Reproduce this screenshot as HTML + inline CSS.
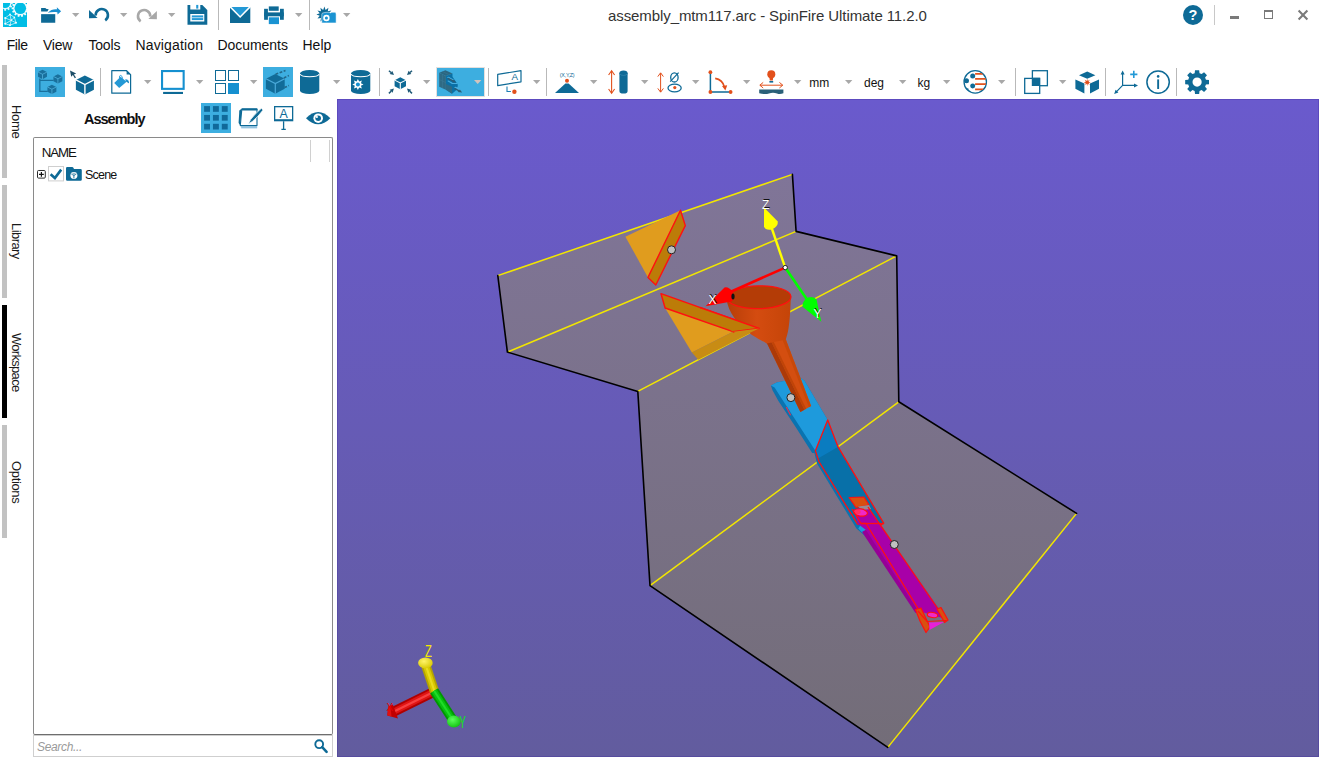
<!DOCTYPE html>
<html><head><meta charset="utf-8"><title>assembly_mtm117.arc - SpinFire Ultimate 11.2.0</title>
<style>
html,body{margin:0;padding:0;background:#fff}
body{width:1320px;height:758px;position:relative;overflow:hidden;font-family:"Liberation Sans",sans-serif;color:#1a1a1a}
.a{position:absolute}
.t{position:absolute;white-space:nowrap;line-height:1}
svg{position:absolute;overflow:visible}
.sep{position:absolute;width:1px;background:#b9b9b9}
.hl{position:absolute;background:#3daee0}
.vt{position:absolute;white-space:nowrap;line-height:1;font-size:13px;transform-origin:0 0;transform:rotate(90deg)}
.bar{position:absolute;left:1.5px;width:5.5px;background:#c2c2c2}
</style></head><body>

<svg style="left:3px;top:3px" width="24" height="24" viewBox="0 0 24 24"><defs><clipPath id="appc"><rect width="24" height="24"/></clipPath></defs>
<rect width="24" height="24" fill="#00bde5"/>
<g clip-path="url(#appc)"><path d="M25.96,4.44 L25.96,6.16 L24.22,6.36 L24.00,7.34 L25.47,8.28 L24.73,9.83 L23.07,9.26 L22.45,10.05 L23.37,11.53 L22.03,12.60 L20.78,11.37 L19.88,11.81 L20.06,13.55 L18.39,13.93 L17.80,12.28 L16.80,12.28 L16.21,13.93 L14.54,13.55 L14.72,11.81 L13.82,11.37 L12.57,12.60 L11.23,11.53 L12.15,10.05 L11.53,9.26 L9.87,9.83 L9.13,8.28 L10.60,7.34 L10.38,6.36 L8.64,6.16 L8.64,4.44 L10.38,4.24 L10.60,3.26 L9.13,2.32 L9.87,0.77 L11.53,1.34 L12.15,0.55 L11.23,-0.93 L12.57,-2.00 L13.82,-0.77 L14.72,-1.21 L14.54,-2.95 L16.21,-3.33 L16.80,-1.68 L17.80,-1.68 L18.39,-3.33 L20.06,-2.95 L19.88,-1.21 L20.78,-0.77 L22.03,-2.00 L23.37,-0.93 L22.45,0.55 L23.07,1.34 L24.73,0.77 L25.47,2.32 L24.00,3.26 L24.22,4.24 Z M17.310000000000002,5.3 A0.01,0.01 0 1 0 17.29,5.3 A0.01,0.01 0 1 0 17.310000000000002,5.3 Z" fill="#f2fbfe" fill-rule="evenodd"/><path d="M9.75,-0.67 L9.75,1.07 L8.11,1.26 L7.85,2.23 L9.17,3.22 L8.30,4.73 L6.78,4.07 L6.07,4.78 L6.73,6.30 L5.22,7.17 L4.23,5.85 L3.26,6.11 L3.07,7.75 L1.33,7.75 L1.14,6.11 L0.17,5.85 L-0.82,7.17 L-2.33,6.30 L-1.67,4.78 L-2.38,4.07 L-3.90,4.73 L-4.77,3.22 L-3.45,2.23 L-3.71,1.26 L-5.35,1.07 L-5.35,-0.67 L-3.71,-0.86 L-3.45,-1.83 L-4.77,-2.82 L-3.90,-4.33 L-2.38,-3.67 L-1.67,-4.38 L-2.33,-5.90 L-0.82,-6.77 L0.17,-5.45 L1.14,-5.71 L1.33,-7.35 L3.07,-7.35 L3.26,-5.71 L4.23,-5.45 L5.22,-6.77 L6.73,-5.90 L6.07,-4.38 L6.78,-3.67 L8.30,-4.33 L9.17,-2.82 L7.85,-1.83 L8.11,-0.86 Z M2.21,0.2 A0.01,0.01 0 1 0 2.1900000000000004,0.2 A0.01,0.01 0 1 0 2.21,0.2 Z" fill="#e4f7fc" fill-rule="evenodd"/><circle cx="17.3" cy="5.3" r="5.8" fill="#00bde5"/><circle cx="2.2" cy="0.2" r="4.9" fill="#00bde5"/>
<g fill="none" stroke="#e9f9fd" stroke-width="0.7" stroke-linejoin="round">
<polygon points="7,11.5 11.4,14.4 13,19.8 7,22.2 2.2,20.8 2.2,15"/>
<path d="M2.2,15 L8.2,17.4 L13,19.8 M8.2,17.4 L7,22.2 M7,11.5 L8.2,17.4 M11.4,14.4 L8.2,17.4 M2.2,20.8 L8.2,17.4"/></g>
<g fill="#f4fcfe"><circle cx="7" cy="11.5" r="0.9"/><circle cx="11.4" cy="14.4" r="0.8"/><circle cx="13" cy="19.8" r="1"/><circle cx="7" cy="22.2" r="0.9"/><circle cx="2.2" cy="20.8" r="1"/><circle cx="2.2" cy="15" r="1"/><circle cx="8.4" cy="17" r="0.8"/></g></g></svg>
<svg style="left:41px;top:7px" width="20" height="16" viewBox="0 0 20 16"><rect x="0.1" y="7.15" width="14.15" height="8.6" fill="#0e6a96"/>
<polygon points="0.1,0.9 4.75,0.9 4.75,1.8 7.7,2.3 6.4,4.5 0.1,4.5" fill="#0e6a96"/>
<path d="M6.8,5.7 C9.5,2.6 12.6,1.9 16,2.2 L15.8,0.3 L20.1,4.2 L16.6,7.4 L16.3,5.3 C13,4.9 10,5.2 6.8,5.7 Z" fill="#1a8fd0"/></svg>
<svg style="left:72.4px;top:13px" width="7.4" height="3.9" viewBox="0 0 7.4 3.9"><polygon points="0,0 7.4,0 3.7,3.9" fill="#a8a8a8"/></svg>
<svg style="left:89px;top:7px" width="20" height="16" viewBox="0 0 20 16"><path d="M6.65,8.6 A6.15,6.15 0 1 1 16.24,13.3" fill="none" stroke="#0e6a96" stroke-width="2.6"/>
<polygon points="0,3 0,11.3 8.6,11.1" fill="#0e6a96"/></svg>
<svg style="left:120.3px;top:13px" width="7.4" height="3.9" viewBox="0 0 7.4 3.9"><polygon points="0,0 7.4,0 3.7,3.9" fill="#a8a8a8"/></svg>
<svg style="left:137px;top:7.6px" width="20" height="16" viewBox="0 0 20 16"><g transform="translate(19.9,0) scale(-1,1)"><path d="M6.65,8.6 A6.15,6.15 0 1 1 16.24,13.3" fill="none" stroke="#a8a8a8" stroke-width="2.6"/>
<polygon points="0,3 0,11.3 8.6,11.1" fill="#a8a8a8"/></g></svg>
<svg style="left:168.2px;top:13px" width="7.4" height="3.9" viewBox="0 0 7.4 3.9"><polygon points="0,0 7.4,0 3.7,3.9" fill="#a8a8a8"/></svg>
<svg style="left:186.7px;top:5px" width="20.4" height="20" viewBox="0 0 20.4 20"><path d="M0.5,0 H15.3 L20.3,5 V19.8 H0.5 Z" fill="#0e6a96"/>
<rect x="3.3" y="-0.1" width="10" height="4.6" fill="#fff"/><rect x="9.2" y="-0.1" width="2.1" height="3.7" fill="#2399d6"/>
<rect x="3.3" y="9" width="14" height="7.5" fill="#fff"/>
<rect x="4.8" y="10.4" width="11.4" height="4.7" fill="#2399d6"/><rect x="4.8" y="12.4" width="11.4" height="0.7" fill="#e8f4fb"/></svg>
<div class="sep" style="left:218px;top:0px;height:30px;background:#b9b9b9"></div>
<svg style="left:229.7px;top:7px" width="20.3" height="16" viewBox="0 0 20.3 16"><rect width="20.3" height="16" fill="#0e6a96"/>
<polygon points="0.6,0 19.7,0 10.15,9.6" fill="#2399d6"/>
<polyline points="0,-0.4 10.15,10 20.3,-0.4" fill="none" stroke="#fff" stroke-width="1.5"/></svg>
<svg style="left:264.2px;top:5.8px" width="20" height="18" viewBox="0 0 20 18"><rect x="4.8" y="0.4" width="9.9" height="4.4" fill="#0e6a96"/>
<rect x="0.1" y="2.8" width="3.8" height="11" fill="#0e6a96"/><rect x="16" y="2.8" width="3.8" height="11" fill="#0e6a96"/>
<rect x="0.1" y="6.4" width="19.7" height="3.9" fill="#0e6a96"/>
<rect x="4.8" y="11.3" width="10.2" height="6.8" fill="#1a93d2"/></svg>
<svg style="left:295.3px;top:13px" width="7.4" height="3.9" viewBox="0 0 7.4 3.9"><polygon points="0,0 7.4,0 3.7,3.9" fill="#a8a8a8"/></svg>
<div class="sep" style="left:308.8px;top:0px;height:30px;background:#b9b9b9"></div>
<svg style="left:316.2px;top:7.4px" width="20" height="16" viewBox="0 0 20 16"><polygon points="16.40,7.60 13.04,8.84 15.33,11.60 11.79,10.99 12.40,14.53 9.64,12.24 8.40,15.60 7.16,12.24 4.40,14.53 5.01,10.99 1.47,11.60 3.76,8.84 0.40,7.60 3.76,6.36 1.47,3.60 5.01,4.21 4.40,0.67 7.16,2.96 8.40,-0.40 9.64,2.96 12.40,0.67 11.79,4.21 15.33,3.60 13.04,6.36" fill="#0e6a96"/><path d="M5.8,7.4 Q5.8,6.1 7,5.9 L10,5.3 H13.8 L14.3,6 H14.9 L15.4,5.3 H19 Q20.1,5.5 20.1,7 V15.9 H5.8 Z" fill="#1a93d2" stroke="#fff" stroke-width="0.5"/>
<circle cx="10.4" cy="11" r="3.2" fill="#fff"/><circle cx="10.4" cy="11" r="1.55" fill="#1a93d2"/></svg>
<svg style="left:343.4px;top:13px" width="7.4" height="3.9" viewBox="0 0 7.4 3.9"><polygon points="0,0 7.4,0 3.7,3.9" fill="#a8a8a8"/></svg>
<svg style="left:1183px;top:4.9px" width="20" height="20" viewBox="0 0 20 20"><circle cx="10" cy="10" r="10" fill="#0e6a96"/>
<text x="10" y="15.2" text-anchor="middle" font-family="Liberation Sans, sans-serif" font-weight="bold" font-size="14.5" fill="#fff">?</text></svg>
<div class="sep" style="left:1214px;top:5px;height:20px;background:#c8c8c8"></div>
<div class="a" style="left:1230px;top:15.6px;width:9px;height:3.4px;background:#7a7a7a"></div>
<div class="a" style="left:1264px;top:10.4px;width:7px;height:5.2px;border:1px solid #7a7a7a;border-top-width:2.4px"></div>
<svg style="left:1298px;top:10.2px" width="10" height="10" viewBox="0 0 10 10"><path d="M0.6,0.6 L9.4,9.4 M9.4,0.6 L0.6,9.4" stroke="#7a7a7a" stroke-width="2.1" fill="none"/></svg>
<div class="t" id="title" style="left:608px;top:8.4px;font-size:15px;letter-spacing:-0.09px;color:#333">assembly_mtm117.arc - SpinFire Ultimate 11.2.0</div>
<div class="t" id="m0" style="left:6.7px;top:38.1px;font-size:14px;letter-spacing:-0.42px;color:#111">File</div>
<div class="t" id="m1" style="left:43px;top:38.1px;font-size:14px;letter-spacing:-0.23px;color:#111">View</div>
<div class="t" id="m2" style="left:88.4px;top:38.1px;font-size:14px;letter-spacing:-0.16px;color:#111">Tools</div>
<div class="t" id="m3" style="left:135.5px;top:38.1px;font-size:14px;letter-spacing:0.15px;color:#111">Navigation</div>
<div class="t" id="m4" style="left:217.4px;top:38.1px;font-size:14px;letter-spacing:-0.04px;color:#111">Documents</div>
<div class="t" id="m5" style="left:302.5px;top:38.1px;font-size:14px;letter-spacing:0px;color:#111">Help</div>
<div class="hl" style="left:35px;top:67px;width:30px;height:30px"></div>
<svg style="left:35px;top:67px" width="30" height="30" viewBox="0 0 30 30"><path d="M4.85,11.4 V24.3 H12.7 M4.85,13.4 H18.6" fill="none" stroke="#19709d" stroke-width="1.3"/><polygon points="7.5,2.8 11.965,5.055999999999999 11.965,9.85 7.5,12.2 3.035,9.85 3.035,5.055999999999999" fill="#19709d"/><path d="M3.035,5.055999999999999 L7.5,7.312 L11.965,5.055999999999999 M7.5,7.312 V12.2" fill="none" stroke="#4fb0dc" stroke-width="0.8"/><polygon points="22.9,7.2 27.365,9.456 27.365,14.25 22.9,16.6 18.435,14.25 18.435,9.456" fill="#19709d"/><path d="M18.435,9.456 L22.9,11.712 L27.365,9.456 M22.9,11.712 V16.6" fill="none" stroke="#4fb0dc" stroke-width="0.8"/><polygon points="16.9,17.7 21.365,19.956 21.365,24.75 16.9,27.099999999999998 12.434999999999999,24.75 12.434999999999999,19.956" fill="#19709d"/><path d="M12.434999999999999,19.956 L16.9,22.212 L21.365,19.956 M16.9,22.212 V27.099999999999998" fill="none" stroke="#4fb0dc" stroke-width="0.8"/></svg>
<svg style="left:70px;top:70px" width="25" height="25" viewBox="0 0 25 25"><polygon points="14.9,5.4 23.925,9.96 23.925,19.65 14.9,24.4 5.875,19.65 5.875,9.96" fill="#0e6a96"/><path d="M5.875,9.96 L14.9,14.52 L23.925,9.96 M14.9,14.52 V24.4" fill="none" stroke="#fff" stroke-width="1.4"/><polygon points="0,0.6 6.2,3.6 3.9,4.4 6,7.6 4.8,8.2 2.9,5.1 1.2,6.8" fill="#1d4e68"/></svg>
<div class="sep" style="left:100px;top:68px;height:28px;background:#b9b9b9"></div>
<svg style="left:110.5px;top:69px" width="21" height="25" viewBox="0 0 21 25"><path d="M0.8,1.7 H15.6 L19.6,5.6 V24.2 H0.8 Z" fill="#fff" stroke="#0e6a96" stroke-width="1.2" stroke-linejoin="round"/>
<polygon points="15.6,1.7 19.6,5.6 15.6,5.6" fill="#0e6a96"/>
<polygon points="3.2,13.9 9.6,7.8 15.6,12.7 8.2,19.1" fill="#2399d6"/>
<path d="M8.4,9.4 Q8.2,6 9.8,6.4 Q11.2,6.8 11.6,9.6" fill="none" stroke="#2399d6" stroke-width="0.9"/>
<path d="M14.2,10.2 Q18.8,10.4 17.8,14.6 Q16.8,12.8 14.8,12.6 Z" fill="#2399d6"/>
<path d="M15.4,12 Q17,12.6 17.4,14" fill="none" stroke="#0e6a96" stroke-width="0.7"/></svg>
<svg style="left:144.2px;top:80px" width="7.4" height="3.9" viewBox="0 0 7.4 3.9"><polygon points="0,0 7.4,0 3.7,3.9" fill="#a8a8a8"/></svg>
<svg style="left:161px;top:70px" width="24" height="24" viewBox="0 0 24 24"><rect x="1.05" y="1.05" width="21.6" height="17.8" fill="#fff" stroke="#1590d0" stroke-width="2.1"/>
<rect x="2.1" y="21.9" width="19.9" height="2.1" fill="#0e6a96"/></svg>
<svg style="left:196.4px;top:80px" width="7.4" height="3.9" viewBox="0 0 7.4 3.9"><polygon points="0,0 7.4,0 3.7,3.9" fill="#a8a8a8"/></svg>
<svg style="left:215px;top:70px" width="24" height="24" viewBox="0 0 24 24"><g fill="#fff" stroke="#0e6a96" stroke-width="1"><rect x="0.5" y="0.5" width="10" height="10"/><rect x="13.5" y="0.5" width="10" height="10"/><rect x="0.5" y="13.5" width="10" height="10"/></g>
<rect x="13" y="13" width="11" height="11" fill="#1590d0"/></svg>
<svg style="left:250px;top:80px" width="7.4" height="3.9" viewBox="0 0 7.4 3.9"><polygon points="0,0 7.4,0 3.7,3.9" fill="#a8a8a8"/></svg>
<div class="hl" style="left:263.3px;top:67px;width:30px;height:30px"></div>
<svg style="left:263.3px;top:67px" width="30" height="30" viewBox="0 0 30 30"><polygon points="12.3,6.999999999999998 21.705,11.751999999999999 21.705,21.849999999999998 12.3,26.799999999999997 2.8950000000000014,21.849999999999998 2.8950000000000014,11.751999999999999" fill="#116c99"/><path d="M2.8950000000000014,11.751999999999999 L12.3,16.503999999999998 L21.705,11.751999999999999 M12.3,16.503999999999998 V26.799999999999997" fill="none" stroke="#4aa9da" stroke-width="1.2"/><g stroke="#23688a" stroke-width="1.6" stroke-dasharray="2.8 1.5" fill="none"><path d="M12.6,7.2 L22.5,3.5"/><path d="M20.8,10.9 L25.9,8.6"/><path d="M21.4,20.6 L25.9,18.6"/></g></svg>
<svg style="left:299.8px;top:69.7px" width="19.3" height="24.1" viewBox="0 0 19.3 24.1"><path d="M0,3.5 V20.5 A9.65,3.6 0 0 0 19.3,20.5 V3.5 Z" fill="#0e6a96"/>
<ellipse cx="9.65" cy="3.5" rx="9.65" ry="3.5" fill="#0e6a96"/>
<path d="M0.2,4.2 A9.5,2.9 0 0 0 19.1,4.2" fill="none" stroke="#fff" stroke-width="1.1"/></svg>
<svg style="left:333.3px;top:80px" width="7.4" height="3.9" viewBox="0 0 7.4 3.9"><polygon points="0,0 7.4,0 3.7,3.9" fill="#a8a8a8"/></svg>
<svg style="left:350.7px;top:69.7px" width="19.3" height="24.1" viewBox="0 0 19.3 24.1"><path d="M0,3.5 V20.5 A9.65,3.6 0 0 0 19.3,20.5 V3.5 Z" fill="#0e6a96"/>
<ellipse cx="9.65" cy="3.5" rx="9.65" ry="3.5" fill="#0e6a96"/>
<path d="M0.2,4.2 A9.5,2.9 0 0 0 19.1,4.2" fill="none" stroke="#fff" stroke-width="1.1"/><polygon points="12.50,14.50 9.95,15.76 10.86,18.46 8.16,17.55 6.90,20.10 5.64,17.55 2.94,18.46 3.85,15.76 1.30,14.50 3.85,13.24 2.94,10.54 5.64,11.45 6.90,8.90 8.16,11.45 10.86,10.54 9.95,13.24" fill="#fff"/><circle cx="6.9" cy="14.5" r="2" fill="#1590d0"/></svg>
<div class="sep" style="left:379.3px;top:68px;height:28px;background:#b9b9b9"></div>
<svg style="left:387.5px;top:70px" width="25" height="24.4" viewBox="0 0 25 24.4"><polygon points="12.3,7.25 18.0,10.129999999999999 18.0,16.25 12.3,19.25 6.600000000000001,16.25 6.600000000000001,10.129999999999999" fill="#0e6a96"/><path d="M6.600000000000001,10.129999999999999 L12.3,13.01 L18.0,10.129999999999999 M12.3,13.01 V19.25" fill="none" stroke="#fff" stroke-width="1.1"/><line x1="0.9" y1="0.7" x2="3.02" y2="2.49" stroke="#1d5876" stroke-width="1.5"/><polygon points="6.00,5.00 1.66,4.09 4.37,0.88" fill="#1d5876"/><line x1="24" y1="0.7" x2="21.96" y2="2.46" stroke="#1d5876" stroke-width="1.5"/><polygon points="19.00,5.00 20.59,0.86 23.33,4.05" fill="#1d5876"/><line x1="0.9" y1="23.4" x2="3.09" y2="21.30" stroke="#1d5876" stroke-width="1.5"/><polygon points="5.90,18.60 4.54,22.82 1.63,19.79" fill="#1d5876"/><line x1="24" y1="23.4" x2="21.81" y2="21.30" stroke="#1d5876" stroke-width="1.5"/><polygon points="19.00,18.60 23.27,19.79 20.36,22.82" fill="#1d5876"/></svg>
<svg style="left:423.3px;top:80px" width="7.4" height="3.9" viewBox="0 0 7.4 3.9"><polygon points="0,0 7.4,0 3.7,3.9" fill="#a8a8a8"/></svg>
<div class="hl" style="left:436.2px;top:67.2px;width:46.6px;height:27.5px;border:1px solid #e4e0de"></div>
<svg style="left:439px;top:70px" width="25" height="24" viewBox="0 0 25 24"><polygon points="6.9,5.9 13.5,3.5 13.5,6.8 18.75,14.4 18.75,16.3 16.85,20.6 13.05,23.7 6.9,19.65" fill="#0a70a6"/>
<polygon points="0.2,2.8 6.4,0.2 13.5,3.5 6.9,5.9" fill="#2b6782"/>
<polygon points="0.2,2.8 6.9,5.9 6.9,19.65 0.2,16.8" fill="#2f6a84"/>
<polygon points="6.9,13.95 13.05,16.8 13.05,23.7 6.9,19.65" fill="#2f6a84"/>
<path d="M0.2,9.6 L6.9,12.6 M3.5,4.4 V18.2 M3.3,1.5 L10.2,4.7" stroke="#3d7a96" stroke-width="0.5" fill="none"/>
<polygon points="7.8,7.3 9.7,6.8 15,9.7 13,10.4" fill="#49afe0"/>
<polygon points="9.2,10.4 14,13 18.2,13 18.2,14 13,14 8.3,11.1" fill="#49afe0"/>
<polygon points="14.9,17.3 16.8,16.8 21.6,19.2 19.7,19.9" fill="#49afe0"/>
<g stroke="#2b5d76" stroke-width="1.4" fill="none"><path d="M8.7,8.25 L14.4,11.1"/><path d="M15.4,18.4 L20.1,20.8"/></g>
<polygon points="17.05,12.5 14.9,9.7 13,12.35" fill="#2b5d76"/><polygon points="23.1,22.5 20.85,19.5 18.7,22.1" fill="#2b5d76"/></svg>
<svg style="left:474.2px;top:80.2px" width="7.4" height="3.9" viewBox="0 0 7.4 3.9"><polygon points="0,0 7.4,0 3.7,3.9" fill="#d2c4be"/></svg>
<div class="sep" style="left:488.3px;top:68px;height:28px;background:#b9b9b9"></div>
<svg style="left:496.6px;top:70px" width="25" height="24" viewBox="0 0 25 24"><polygon points="0.7,4.4 24,0.7 24,11.8 0.7,15.6" fill="#fff" stroke="#0e6a96" stroke-width="1.2" stroke-linejoin="round"/>
<text x="14.6" y="10.2" font-family="Liberation Sans, sans-serif" font-size="9.8" fill="#0e6a96">A</text>
<path d="M10,16.5 V21.5 H13.9" fill="none" stroke="#1e7fb4" stroke-width="1.1"/>
<circle cx="17.4" cy="21.8" r="2.2" fill="#e2501c"/></svg>
<svg style="left:532.6px;top:80px" width="7.4" height="3.9" viewBox="0 0 7.4 3.9"><polygon points="0,0 7.4,0 3.7,3.9" fill="#a8a8a8"/></svg>
<div class="sep" style="left:546.3px;top:68px;height:28px;background:#b9b9b9"></div>
<svg style="left:555px;top:72px" width="24" height="21" viewBox="0 0 24 21"><text x="12.1" y="4.5" text-anchor="middle" font-family="Liberation Sans, sans-serif" font-size="5.4" letter-spacing="-0.25" fill="#0e6a96">(X,Y,Z)</text>
<polygon points="0,21 24,21 13.6,11.4 10.4,11.4" fill="#0e6a96"/>
<circle cx="12" cy="8.8" r="2" fill="#e2501c"/></svg>
<svg style="left:590.2px;top:80px" width="7.4" height="3.9" viewBox="0 0 7.4 3.9"><polygon points="0,0 7.4,0 3.7,3.9" fill="#a8a8a8"/></svg>
<svg style="left:607.5px;top:70px" width="20" height="24" viewBox="0 0 20 24"><path d="M3.6,1 V23" stroke="#e2501c" stroke-width="1.1"/>
<path d="M0.6,5 L3.6,0.8 L6.6,5 M0.6,19 L3.6,23.2 L6.6,19" fill="none" stroke="#e2501c" stroke-width="1.1"/>
<path d="M11.4,3 V21 A4.1,2.6 0 0 0 19.6,21 V3 Z" fill="#0e6a96"/><ellipse cx="15.5" cy="3" rx="4.1" ry="2.6" fill="#0e6a96"/>
<path d="M11.6,3.6 A4,2.4 0 0 0 19.4,3.6" fill="none" stroke="#3d8cb4" stroke-width="0.6"/></svg>
<svg style="left:641.3px;top:80px" width="7.4" height="3.9" viewBox="0 0 7.4 3.9"><polygon points="0,0 7.4,0 3.7,3.9" fill="#a8a8a8"/></svg>
<svg style="left:656.7px;top:71.6px" width="25" height="21" viewBox="0 0 25 21"><path d="M3.6,1 V20" stroke="#e2501c" stroke-width="1"/>
<path d="M0.8,4.6 L3.6,0.8 L6.4,4.6 M0.8,16.4 L3.6,20.2 L6.4,16.4" fill="none" stroke="#e2501c" stroke-width="1"/>
<ellipse cx="17.4" cy="5.4" rx="3.7" ry="4.6" fill="none" stroke="#0e6a96" stroke-width="1.3"/>
<path d="M13.2,9.6 L21.6,0.6" stroke="#0e6a96" stroke-width="1.2"/>
<ellipse cx="17.6" cy="16" rx="6.6" ry="3.9" fill="#fff" stroke="#0e6a96" stroke-width="1.3"/>
<circle cx="17.8" cy="15.6" r="1.6" fill="#e2501c"/></svg>
<svg style="left:692.1px;top:80px" width="7.4" height="3.9" viewBox="0 0 7.4 3.9"><polygon points="0,0 7.4,0 3.7,3.9" fill="#a8a8a8"/></svg>
<svg style="left:707.5px;top:70px" width="25" height="24" viewBox="0 0 25 24"><path d="M2.4,2 V22 H22.6" fill="none" stroke="#0e6a96" stroke-width="1.5"/>
<path d="M7.2,8.4 Q14.6,9.6 16.6,17.4" fill="none" stroke="#e2501c" stroke-width="1.6"/>
<polygon points="14,16 19.2,15.2 17.4,20.4" fill="#e2501c"/>
<circle cx="2.4" cy="2.2" r="1.9" fill="#e2501c"/><circle cx="2.4" cy="22" r="1.9" fill="#e2501c"/><circle cx="22.6" cy="22" r="1.9" fill="#e2501c"/></svg>
<svg style="left:743.3px;top:80px" width="7.4" height="3.9" viewBox="0 0 7.4 3.9"><polygon points="0,0 7.4,0 3.7,3.9" fill="#a8a8a8"/></svg>
<svg style="left:758.8px;top:70px" width="24.6" height="24" viewBox="0 0 24.6 24"><circle cx="12.3" cy="4.2" r="4" fill="#e2501c"/><path d="M10.2,6 H14.4 L13.8,10.6 H10.8 Z" fill="#e2501c"/>
<rect x="10.4" y="11" width="3.8" height="1.6" fill="#0e6a96"/>
<path d="M1,15.2 H23.6" stroke="#e2501c" stroke-width="1"/><path d="M4.2,12.4 L0.8,15.2 L4.2,18 M20.4,12.4 L23.8,15.2 L20.4,18" fill="none" stroke="#e2501c" stroke-width="1"/>
<path d="M0.2,19.4 H24.4 V23.2 Q21,24.6 18,23.4 Q14,22 10,23.4 Q6,24.8 0.2,23.2 Z" fill="#2a6078"/></svg>
<svg style="left:794.3px;top:80px" width="7.4" height="3.9" viewBox="0 0 7.4 3.9"><polygon points="0,0 7.4,0 3.7,3.9" fill="#a8a8a8"/></svg>
<div class="t" id="u0" style="left:809.3px;top:76.5px;font-size:12px;letter-spacing:0px;color:#111">mm</div>
<svg style="left:845.3px;top:80px" width="7.4" height="3.9" viewBox="0 0 7.4 3.9"><polygon points="0,0 7.4,0 3.7,3.9" fill="#a8a8a8"/></svg>
<div class="t" id="u1" style="left:864px;top:76.5px;font-size:12px;letter-spacing:0px;color:#111">deg</div>
<svg style="left:899.2px;top:80px" width="7.4" height="3.9" viewBox="0 0 7.4 3.9"><polygon points="0,0 7.4,0 3.7,3.9" fill="#a8a8a8"/></svg>
<div class="t" id="u2" style="left:917.5px;top:76.5px;font-size:12px;letter-spacing:0px;color:#111">kg</div>
<svg style="left:943.2px;top:80px" width="7.4" height="3.9" viewBox="0 0 7.4 3.9"><polygon points="0,0 7.4,0 3.7,3.9" fill="#a8a8a8"/></svg>
<svg style="left:962.8px;top:70px" width="24.4" height="24.4" viewBox="0 0 24.4 24.4"><defs><clipPath id="c17"><circle cx="12.25" cy="11.9" r="10.9"/></clipPath></defs>
<circle cx="12.25" cy="11.9" r="11.2" fill="#fff" stroke="#0e6a96" stroke-width="1.3"/>
<g stroke="#e0531e" stroke-width="1.8" clip-path="url(#c17)"><path d="M12.1,3.85 H24 M12.1,8.8 H24 M12.1,14.1 H24 M12.1,19.4 H24"/></g>
<g fill="#0e6a96"><circle cx="9.7" cy="6" r="2.5"/><circle cx="3.5" cy="10.8" r="2.5"/><circle cx="9.7" cy="16.1" r="2.5"/><circle cx="4.6" cy="19.3" r="1"/></g></svg>
<svg style="left:998.2px;top:80px" width="7.4" height="3.9" viewBox="0 0 7.4 3.9"><polygon points="0,0 7.4,0 3.7,3.9" fill="#a8a8a8"/></svg>
<div class="sep" style="left:1015.3px;top:68px;height:28px;background:#b9b9b9"></div>
<svg style="left:1024.2px;top:70px" width="24.2" height="24" viewBox="0 0 24.2 24"><rect x="8.4" y="0.7" width="15" height="15" fill="#fff" stroke="#0e6a96" stroke-width="1.3"/>
<rect x="0.7" y="8.4" width="15" height="15" fill="#fff" stroke="#0e6a96" stroke-width="1.3"/>
<rect x="7.8" y="7.8" width="8.2" height="8.2" fill="#0e6a96"/></svg>
<svg style="left:1059.3px;top:80px" width="7.4" height="3.9" viewBox="0 0 7.4 3.9"><polygon points="0,0 7.4,0 3.7,3.9" fill="#a8a8a8"/></svg>
<svg style="left:1075px;top:70.6px" width="24.4" height="23" viewBox="0 0 24.4 23"><polygon points="12.2,0.6 20.4,4.2 12.2,7.8 4,4.2" fill="#0e6a96"/>
<polygon points="0.4,8.4 9.4,12.6 9.4,22.4 0.4,17.8" fill="#0e6a96"/>
<polygon points="24,8.4 15,12.6 15,22.4 24,17.8" fill="#0e6a96"/><polygon points="15.80,11.40 13.59,11.97 14.75,13.95 12.77,12.79 12.20,15.00 11.63,12.79 9.65,13.95 10.81,11.97 8.60,11.40 10.81,10.83 9.65,8.85 11.63,10.01 12.20,7.80 12.77,10.01 14.75,8.85 13.59,10.83" fill="#e2501c"/></svg>
<div class="sep" style="left:1105.3px;top:68px;height:28px;background:#b9b9b9"></div>
<svg style="left:1114.2px;top:70px" width="24.4" height="24" viewBox="0 0 24.4 24"><path d="M8.6,3 V15.4 H21 M8.6,15.4 L1.6,22.6" fill="none" stroke="#0e6a96" stroke-width="1.2"/>
<polygon points="8.6,0.4 10.6,4.4 6.6,4.4" fill="#0e6a96"/><polygon points="24,15.4 20,13.4 20,17.4" fill="#0e6a96"/><polygon points="0.2,24 1.6,19.8 4.4,22.6" fill="#0e6a96"/>
<path d="M19.8,0.8 V8 M16.2,4.4 H23.4" stroke="#2399d6" stroke-width="1.6"/></svg>
<svg style="left:1145.8px;top:70px" width="24.2" height="24.2" viewBox="0 0 24.2 24.2"><circle cx="12.1" cy="12.1" r="11.2" fill="#fff" stroke="#0e6a96" stroke-width="1.5"/>
<rect x="11.2" y="9.4" width="1.9" height="9.6" fill="#0e6a96"/><circle cx="12.15" cy="6.4" r="1.3" fill="#0e6a96"/></svg>
<div class="sep" style="left:1176.3px;top:68px;height:28px;background:#b9b9b9"></div>
<svg style="left:1185px;top:70px" width="24.2" height="24.2" viewBox="0 0 24.2 24.2"><path d="M24.02,10.02 L24.02,14.18 L20.97,14.53 L20.09,16.66 L22.00,19.06 L19.06,22.00 L16.66,20.09 L14.53,20.97 L14.18,24.02 L10.02,24.02 L9.67,20.97 L7.54,20.09 L5.14,22.00 L2.20,19.06 L4.11,16.66 L3.23,14.53 L0.18,14.18 L0.18,10.02 L3.23,9.67 L4.11,7.54 L2.20,5.14 L5.14,2.20 L7.54,4.11 L9.67,3.23 L10.02,0.18 L14.18,0.18 L14.53,3.23 L16.66,4.11 L19.06,2.20 L22.00,5.14 L20.09,7.54 L20.97,9.67 Z M16.7,12.1 A4.6,4.6 0 1 0 7.5,12.1 A4.6,4.6 0 1 0 16.7,12.1 Z" fill="#0e6a96" fill-rule="evenodd"/></svg>
<div class="bar" style="top:65px;height:113px;background:#c2c2c2"></div>
<div class="vt" id="vt0" style="left:22.5px;top:105.2px;letter-spacing:-0.3px">Home</div>
<div class="bar" style="top:185px;height:113px;background:#c2c2c2"></div>
<div class="vt" id="vt1" style="left:22.5px;top:223px;letter-spacing:-0.57px">Library</div>
<div class="bar" style="top:305px;height:113px;background:#000"></div>
<div class="vt" id="vt2" style="left:22.5px;top:332.7px;letter-spacing:-0.7px">Workspace</div>
<div class="bar" style="top:425px;height:113px;background:#c2c2c2"></div>
<div class="vt" id="vt3" style="left:22.5px;top:461px;letter-spacing:-0.34px">Options</div>
<div class="t" id="asm" style="left:84px;top:111.9px;font-size:14.5px;letter-spacing:-1.0px;font-weight:bold;color:#111">Assembly</div>
<div class="hl" style="left:201px;top:103.4px;width:29.6px;height:29.4px"></div>
<svg style="left:204.2px;top:106.6px" width="24" height="23" viewBox="0 0 24 23"><rect x="0.10" y="-0.90" width="5.9" height="5.7" fill="#10699a"/><rect x="8.95" y="-0.90" width="5.9" height="5.7" fill="#10699a"/><rect x="17.80" y="-0.90" width="5.9" height="5.7" fill="#10699a"/><rect x="0.10" y="7.95" width="5.9" height="5.7" fill="#10699a"/><rect x="8.95" y="7.95" width="5.9" height="5.7" fill="#10699a"/><rect x="17.80" y="7.95" width="5.9" height="5.7" fill="#10699a"/><rect x="0.10" y="16.80" width="5.9" height="5.7" fill="#10699a"/><rect x="8.95" y="16.80" width="5.9" height="5.7" fill="#10699a"/><rect x="17.80" y="16.80" width="5.9" height="5.7" fill="#10699a"/></svg>
<svg style="left:238px;top:107px" width="25" height="21" viewBox="0 0 25 21"><polygon points="3.8,1.4 1.3,3.4 0.6,16 2.3,18.6" fill="#0e6a96"/>
<path d="M3.8,2.4 H19 V18.5 H2.3 Z" fill="#fff" stroke="#0e6a96" stroke-width="1.1" stroke-linejoin="round"/>
<rect x="3.6" y="1.2" width="15.9" height="2.2" rx="0.8" fill="#0e6a96"/>
<path d="M2.6,19.7 H19.2 M3.2,20.8 H19.2" stroke="#3d94c4" stroke-width="0.7" fill="none"/>
<path d="M23.4,1.3 L25,3.1 Q20,10 14.6,14.2 L10.4,16.9 L12.6,12.6 Q17.4,6.4 23.4,1.3 Z" fill="#0e6a96" stroke="#fff" stroke-width="0.7"/></svg>
<svg style="left:274.3px;top:106.4px" width="19.4" height="24" viewBox="0 0 19.4 24"><rect x="0.65" y="0.65" width="18" height="14" fill="#fff" stroke="#0e6a96" stroke-width="1.3"/>
<rect x="0.65" y="13.2" width="18" height="1.6" fill="#0e6a96"/>
<text x="9.7" y="11.8" text-anchor="middle" font-family="Liberation Sans, sans-serif" font-size="12.4" fill="#0e6a96">A</text>
<path d="M9.6,15.2 V23 M7.4,23.3 H11.8" stroke="#0e6a96" stroke-width="1.3" fill="none"/></svg>
<svg style="left:305.8px;top:111.9px" width="24.4" height="12.4" viewBox="0 0 24.4 12.4"><path d="M0,6.2 Q12.2,-6 24.4,6.2 Q12.2,18.4 0,6.2 Z" fill="#0e6a96"/>
<circle cx="12.2" cy="6.2" r="4.8" fill="#fff"/><circle cx="12.2" cy="6.2" r="2.8" fill="#0e6a96"/><circle cx="10.9" cy="5" r="1.1" fill="#fff"/></svg>
<svg style="left:37.1px;top:170.2px" width="8.8" height="8.6" viewBox="0 0 8.8 8.6"><rect x="0.5" y="0.5" width="7.8" height="7.6" rx="1" fill="#fff" stroke="#2a2a2a" stroke-width="1"/><path d="M2,4.3 H6.8 M4.4,1.9 V6.7" stroke="#111" stroke-width="1.2"/></svg>
<svg style="left:48px;top:166.3px" width="16" height="15.4" viewBox="0 0 16 15.4"><rect x="0.5" y="0.5" width="15" height="14.4" fill="#fff" stroke="#cfcfcf" stroke-width="1"/><path d="M2.6,8.2 L6.9,12 L13.2,3.6" fill="none" stroke="#0e6a96" stroke-width="2.6"/></svg>
<svg style="left:66.2px;top:167.1px" width="15.8" height="13.7" viewBox="0 0 15.8 13.7"><path d="M0,1.2 Q0,0 1.2,0 H6.2 Q7,0 7.4,0.8 L8,2 H14.6 Q15.8,2 15.8,3.2 V12.5 Q15.8,13.7 14.6,13.7 H1.2 Q0,13.7 0,12.5 Z" fill="#0e6a96"/>
<circle cx="7.9" cy="8.4" r="3.5" fill="#fff"/>
<path d="M7.9,8.6 V11.4 M7.9,8.6 L5.4,7 M7.9,8.6 L10.4,7" stroke="#0e6a96" stroke-width="0.9" fill="none"/>
<polygon points="7.9,5.6 10.2,6.9 7.9,8.2 5.6,6.9" fill="#8fb8cc"/></svg>
<svg style="left:313.6px;top:739px" width="14" height="14" viewBox="0 0 14 14"><circle cx="5.2" cy="5.2" r="3.9" fill="#fff" stroke="#0e6a96" stroke-width="1.9"/>
<path d="M8.2,8.2 L12.6,12.8" stroke="#0e6a96" stroke-width="2.6" stroke-linecap="round"/></svg>
<div class="a" style="left:33px;top:137px;width:298px;height:596px;border:1px solid #8a8a8a;border-bottom-color:#6e6e6e;border-radius:2px"></div>
<div class="t" id="nm" style="left:41.7px;top:145.8px;font-size:13.3px;letter-spacing:-1.05px;color:#111">NAME</div>
<div class="sep" style="left:310px;top:140px;height:22px;background:#d0d0d0"></div>
<div class="sep" style="left:329px;top:140px;height:22px;background:#d0d0d0"></div>
<div class="t" id="sc" style="left:85px;top:168.7px;font-size:12.5px;letter-spacing:-0.8px;color:#111">Scene</div>
<div class="a" style="left:33px;top:735px;width:298px;height:20px;border:1px solid #cfcfcf"></div>
<div class="t" id="se" style="left:37px;top:740.8px;font-size:12px;letter-spacing:-0.33px;font-style:italic;color:#9a9a9a">Search...</div>
<div class="a" style="left:337px;top:99px;width:982px;height:658px;background:linear-gradient(#6a5acd,#625c9e);box-shadow:inset 0 0 0 1px rgba(60,40,160,0.3)"></div>
<svg style="left:0;top:0" width="1320" height="758" viewBox="0 0 1320 758">
<defs>
<linearGradient id="gs" gradientUnits="userSpaceOnUse" x1="0" y1="174" x2="0" y2="747">
<stop offset="0" stop-color="#807598"/><stop offset="1" stop-color="#736d78"/></linearGradient>
<linearGradient id="bowl" gradientUnits="userSpaceOnUse" x1="728" y1="0" x2="792" y2="0">
<stop offset="0" stop-color="#b83e08"/><stop offset="0.45" stop-color="#d44c10"/><stop offset="1" stop-color="#c44408"/></linearGradient>
<radialGradient id="by" cx="0.4" cy="0.35" r="0.7"><stop offset="0" stop-color="#fff36a"/><stop offset="1" stop-color="#d8c800"/></radialGradient>
<radialGradient id="bg" cx="0.4" cy="0.35" r="0.7"><stop offset="0" stop-color="#5dff5d"/><stop offset="1" stop-color="#10c010"/></radialGradient>
</defs>
<polygon points="497.8,275.6 792.4,174.4 796.1,231.4 896.7,255.9 898.8,401.8 1076.6,513.4 887.8,747.4 650,585.6 637.8,391.4 507.4,352.1" fill="url(#gs)"/>
<line x1="497.8" y1="275.6" x2="792.4" y2="174.4" stroke="#f2e600" stroke-width="1.5"/>
<line x1="507.4" y1="352.1" x2="796.1" y2="231.4" stroke="#f2e600" stroke-width="1.5"/>
<line x1="637.8" y1="391.4" x2="896.7" y2="255.9" stroke="#f2e600" stroke-width="1.5"/>
<line x1="650" y1="585.6" x2="898.8" y2="401.8" stroke="#f2e600" stroke-width="1.5"/>
<line x1="887.8" y1="747.4" x2="1076.6" y2="513.4" stroke="#f2e600" stroke-width="1.5"/>
<polyline points="497.8,275.6 507.4,352.1 637.8,391.4 650,585.6 887.8,747.4" fill="none" stroke="#000" stroke-width="1.6" stroke-linejoin="round" stroke-linecap="round"/>
<polyline points="792.4,174.4 796.1,231.4 896.7,255.9 898.8,401.8 1076.6,513.4" fill="none" stroke="#000" stroke-width="1.6" stroke-linejoin="round" stroke-linecap="round"/>
<polygon points="625.4,236.8 680.5,210.2 648,277.4" fill="#e09c1e"/>
<polygon points="680.5,210.2 685.3,225.6 655.8,285 648,277.4" fill="#bc7c08" stroke="#ff1010" stroke-width="1.4" stroke-linejoin="round"/>
<polygon points="665.1,308 733,331.7 691.9,352.6" fill="#e09c1e"/>
<polygon points="691.9,352.6 733,331.7 759.1,328.4 698.3,359.7" fill="#c88c14"/>
<polygon points="661,293.7 759.1,328.4 733,331.7 665.1,308" fill="#bc7c08" stroke="#ff1010" stroke-width="1.4" stroke-linejoin="round"/>
<polygon points="770.9,385.4 776.6,382.5 800.4,377.7 804.5,380.7 827.7,419.9 838.1,446.9 883.7,523.2 866,524.5 868.6,527.5 868.3,532.6 864.8,535.8 856.4,528.6 817,463.4 814.4,453 812.2,453.1 795.6,427 778.4,400.9 772.5,390.2" fill="#0a73b0"/>
<polygon points="770.9,385.4 776.6,382.5 800.4,377.7 804.5,380.7 827.7,419.9 815.4,450.8 780.8,397.3 774.6,387.4" fill="#1e9adc"/>
<polygon points="827.7,419.9 838.1,446.9 817.4,459 815.4,450.8" fill="#0a7cc0"/>
<polygon points="838.1,446.9 883.7,523.2 866,524.5 857.5,524.1 818.9,461.5 817.4,459" fill="#0870a8"/>
<polygon points="860.9,524.6 868.6,527.5 868.3,532.6 864.8,535.6 858.3,528.4" fill="#1e9adc"/>
<polyline points="866,524.1 857.5,524.1 818.9,461.5 815.4,450.8 827.7,419.9 838.1,446.9 883.7,523.2 880.6,525.3" fill="none" stroke="#ff1010" stroke-width="1.3" stroke-linejoin="round"/>
<line x1="786.3" y1="407" x2="790.6" y2="415.3" stroke="#e03050" stroke-width="1.2"/>
<polygon points="766.6,342.5 785.6,338.9 811.1,406 800.4,411.9" fill="#d44e10"/>
<polygon points="766.6,342.5 771.2,341.6 804.4,409.7 800.4,411.9" fill="#ac3a08"/>
<polygon points="771.2,341.6 773.4,341.2 806.2,408.7 804.4,409.7" fill="#c04408"/>
<polygon points="782.4,339.5 785.6,338.9 811.1,406 808.9,407.2" fill="#c84808"/>
<path d="M726.5,299 C728,312 738,325 752,335 C758,339 763,341 766.6,343.5 L785.6,339.8 C788.5,333 790,322 790.8,298 Z" fill="url(#bowl)"/>
<ellipse cx="758.8" cy="297.2" rx="32.2" ry="11.4" fill="#b43c06" stroke="#ff1010" stroke-width="1.3" transform="rotate(-1 758.8 297.2)"/>
<polygon points="700,307.5 759.1,328.4 733,331.7" fill="#bc7c08"/>
<polyline points="700,307.5 759.1,328.4 733,331.7" fill="none" stroke="#ff1010" stroke-width="1.4" stroke-linejoin="round"/>
<polygon points="733,331.7 759.1,328.4 742,336.5" fill="#c88c14"/>
<polygon points="862,532 868,528.5 919,610 915.5,613" fill="#960096"/>
<polygon points="853.5,509.5 868,507 946,619 918,611 866,530 858,524" fill="#a800a8"/>
<polygon points="849,497.5 864,497 869,505 856,507.5" fill="#d85010" stroke="#ff1010" stroke-width="1.2" stroke-linejoin="round"/>
<polygon points="858,506.5 869,505 871,509 862,510" fill="#9a8a90"/>
<ellipse cx="860.5" cy="512.5" rx="7" ry="3.6" fill="#f028c8" stroke="#ff1010" stroke-width="1.2" transform="rotate(8 860.5 512.5)"/>
<ellipse cx="857.5" cy="512" rx="3" ry="2.4" fill="#ff3060"/>
<polyline points="852,509 861,523.5 866,523.5 918,608.5" fill="none" stroke="#ff1010" stroke-width="1.3" stroke-linejoin="round"/>
<polyline points="868,507 938,609" fill="none" stroke="#ff1010" stroke-width="1.3"/>
<polyline points="861,523.5 884,523.5" fill="none" stroke="#ff1010" stroke-width="1.3"/>
<polygon points="915.5,609.5 921,608 930,627 926,632.5 920,621" fill="#d85010" stroke="#ff1010" stroke-width="1.2" stroke-linejoin="round"/>
<polygon points="937,609 941,607.5 948,620 944.5,622.5" fill="#d85010" stroke="#ff1010" stroke-width="1.2" stroke-linejoin="round"/>
<polygon points="929,622.5 944,622 929.5,630" fill="#e820d8"/>
<ellipse cx="932.5" cy="615" rx="5.2" ry="2.6" fill="#f028c8" stroke="#ff1010" stroke-width="1.1" transform="rotate(8 932.5 615)"/>
<polyline points="918,611 927,621.5 946,620.5" fill="none" stroke="#ff1010" stroke-width="1.2"/>
<circle cx="671.5" cy="249.8" r="4" fill="#c0c0c0" stroke="#222" stroke-width="1"/>
<circle cx="790.9" cy="397.6" r="4" fill="#c0c0c0" stroke="#222" stroke-width="1"/>
<circle cx="894.3" cy="544.5" r="4" fill="#c0c0c0" stroke="#222" stroke-width="1"/>
<line x1="785.2" y1="267.6" x2="771" y2="226" stroke="#ffff00" stroke-width="2.4"/>
<path d="M764,207.5 L777.8,221.5 Q778.5,226.5 771.5,229.5 Q765.5,230.5 764,226.5 Z" fill="#ffff00"/>
<line x1="785.2" y1="267.6" x2="728" y2="293" stroke="#ff0000" stroke-width="2.6"/>
<path d="M705.6,306.2 L724.5,287.5 Q729,286.5 732.5,292 Q735,298 731.5,301.5 Z" fill="#ff0000"/>
<ellipse cx="733" cy="296.5" rx="1.6" ry="3" fill="#111"/>
<line x1="785.2" y1="267.6" x2="808" y2="301" stroke="#00ff00" stroke-width="2.6"/>
<path d="M821.3,321.8 L802.5,306.8 Q802,301.5 808,297.6 Q813.5,295.6 816.5,299.5 Z" fill="#00ff00"/>
<circle cx="785.2" cy="267.6" r="2.2" fill="#fff" stroke="#111" stroke-width="0.9"/>
<text x="762.8" y="207.7" font-family="Liberation Sans, sans-serif" font-size="12" fill="#111">Z</text>
<text x="762" y="208.5" font-family="Liberation Sans, sans-serif" font-size="12" fill="#fff">Z</text>
<text x="709.3" y="302.7" font-family="Liberation Sans, sans-serif" font-size="12" fill="#111">X</text>
<text x="708.5" y="303.5" font-family="Liberation Sans, sans-serif" font-size="12" fill="#fff">X</text>
<text x="814.3" y="317.2" font-family="Liberation Sans, sans-serif" font-size="12" fill="#111">Y</text>
<text x="813.5" y="318" font-family="Liberation Sans, sans-serif" font-size="12" fill="#fff">Y</text>
<line x1="434.5" y1="691.4" x2="393.5" y2="711.8" stroke="#b00000" stroke-width="10"/><line x1="434.5" y1="691.4" x2="393.5" y2="711.8" stroke="#e01414" stroke-width="6.20"/><line x1="434.5" y1="691.4" x2="393.5" y2="711.8" stroke="#f64040" stroke-width="2.20"/>
<polygon points="388.3,706.6 392.8,704.6 398,718.6 387.3,715.4" fill="#c00000"/>
<polygon points="388.3,706.6 390.4,705.8 391.5,716.6 387.3,715.4" fill="#e01010"/>
<line x1="434.5" y1="691.4" x2="426" y2="666" stroke="#b4a400" stroke-width="9.4"/><line x1="434.5" y1="691.4" x2="426" y2="666" stroke="#d8c800" stroke-width="5.83"/><line x1="434.5" y1="691.4" x2="426" y2="666" stroke="#e8dc20" stroke-width="2.07"/>
<line x1="434.1" y1="690.8" x2="452.6" y2="719.5" stroke="#009800" stroke-width="9.6"/><line x1="434.1" y1="690.8" x2="452.6" y2="719.5" stroke="#08c010" stroke-width="5.95"/><line x1="434.1" y1="690.8" x2="452.6" y2="719.5" stroke="#20dc28" stroke-width="2.11"/>
<ellipse cx="425.4" cy="662.9" rx="7.3" ry="5.4" fill="url(#by)"/>
<ellipse cx="453.9" cy="721.5" rx="6.9" ry="6" fill="url(#bg)"/>
<text transform="translate(425,657.2) scale(0.68,1)" font-family="Liberation Sans, sans-serif" font-size="16.5" fill="#f4e800">Z</text>
<text transform="translate(459.2,727.8) scale(0.6,1)" font-family="Liberation Sans, sans-serif" font-size="16.5" fill="#10e418">Y</text>
<text x="386.5" y="710.5" font-family="Liberation Sans, sans-serif" font-size="10" fill="#e80000">X</text>
</svg>
</body></html>
